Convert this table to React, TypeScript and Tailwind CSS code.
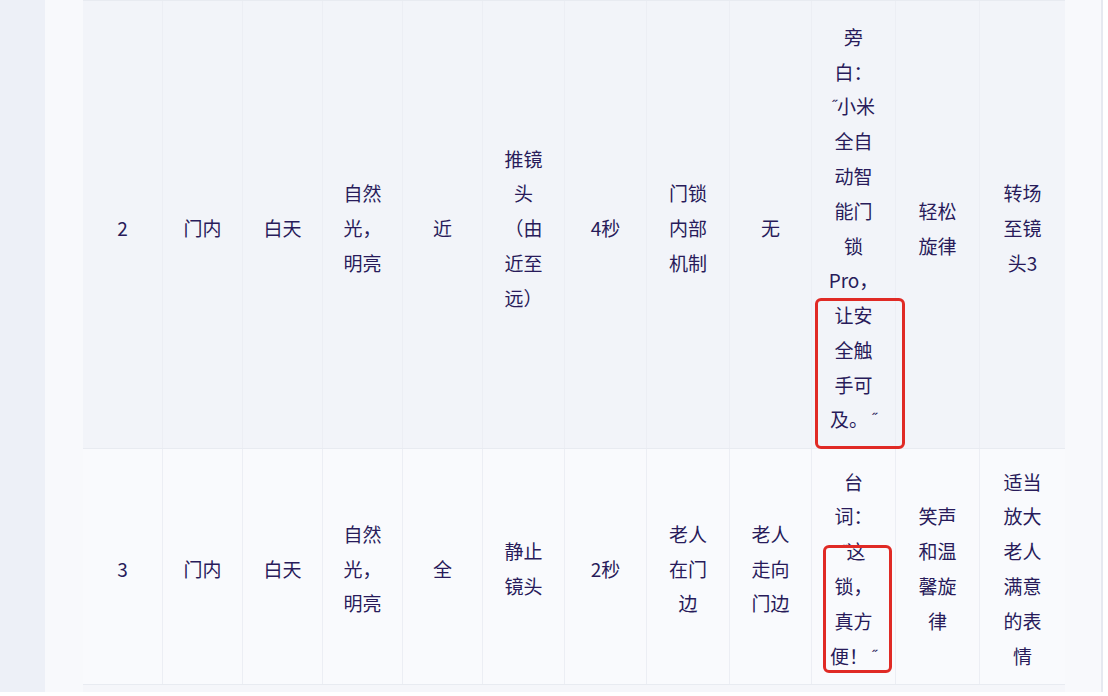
import React from "react";

type Cell = string[];

const widths = [
  "w-[80px]", "w-[80px]", "w-[80px]", "w-[80px]", "w-[80px]", "w-[82px]",
  "w-[82px]", "w-[83px]", "w-[82px]", "w-[84px]", "w-[84px]", "w-[85px]",
];

const rows: { h: string; bg: string; pad: string; cells: Cell[] }[] = [
  {
    h: "h-[448px]",
    bg: "bg-[#f2f4f9]",
    pad: "pt-[8px]",
    cells: [
      ["2"],
      ["门内"],
      ["白天"],
      ["自然", "光，", "明亮"],
      ["近"],
      ["推镜", "头", "（由", "近至", "远）"],
      ["4秒"],
      ["门锁", "内部", "机制"],
      ["无"],
      ["旁", "白：", "“小米", "全自", "动智", "能门", "锁", "Pro，", "让安", "全触", "手可", "及。”"],
      ["轻松", "旋律"],
      ["转场", "至镜", "头3"],
    ],
  },
  {
    h: "h-[236px]",
    bg: "bg-[#f9fafd]",
    pad: "pt-[5px]",
    cells: [
      ["3"],
      ["门内"],
      ["白天"],
      ["自然", "光，", "明亮"],
      ["全"],
      ["静止", "镜头"],
      ["2秒"],
      ["老人", "在门", "边"],
      ["老人", "走向", "门边"],
      ["台", "词：", "“这", "锁，", "真方", "便！”"],
      ["笑声", "和温", "馨旋", "律"],
      ["适当", "放大", "老人", "满意", "的表", "情"],
    ],
  },
];

function Line({ text }: { text: string }) {
  // curly quotes are narrow in the source, keep them latin-width
  const parts = text.split(/([“”])/);
  return (
    <div className="whitespace-nowrap">
      {parts.map((p, i) =>
        p === "“" || p === "”" ? (
          <span key={i} className="font-['Liberation_Sans',sans-serif] text-[15px] align-top">
            {p === "“" ? "˝" : " ˝"}
          </span>
        ) : (
          <span key={i}>{p}</span>
        )
      )}
    </div>
  );
}

export default function App() {
  return (
    <div className="relative w-[1108px] h-[696px] overflow-hidden bg-white font-['Noto_Sans_CJK_SC',sans-serif] text-[19px] leading-[34.8px] text-[#281b5a]">
      <div className="flex h-[692px]">
        <div className="w-[45px] shrink-0 bg-[#edf0f7]" />
        <div className="w-[38px] shrink-0 bg-[#f8f9fc]" />
        <div className="w-[982px] shrink-0 flex flex-col border-t border-[#e8ebf1]">
          {rows.map((row, ri) => (
            <div key={ri} className={`flex ${row.h} ${row.bg} border-b border-[#e8ebf1] shrink-0`}>
              {row.cells.map((cell, ci) => (
                <div
                  key={ci}
                  className={`${widths[ci]} ${row.pad} shrink-0 flex flex-col items-center justify-center text-center border-r border-[#eceef4] last:border-r-0`}
                >
                  {cell.map((t, li) => (
                    <Line key={li} text={t} />
                  ))}
                </div>
              ))}
            </div>
          ))}
          <div className="flex-1 bg-[#f5f6fa]" />
        </div>
        <div className="w-[38px] shrink-0 bg-[#f8f9fc] border-r-2 border-[#e6e9f0]" />
      </div>

      {/* red highlight boxes */}
      <div className="absolute left-[815px] top-[298px] w-[90px] h-[151px] border-[3px] border-[#e02a25] rounded-[6px]" />
      <div className="absolute left-[823px] top-[545px] w-[69px] h-[128px] border-[3px] border-[#e02a25] rounded-[6px]" />
    </div>
  );
}
